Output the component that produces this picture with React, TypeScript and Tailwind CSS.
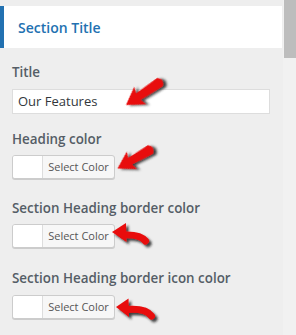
import React from "react";

const font = { fontFamily: '"Open Sans", "Noto Sans", sans-serif' };

function ColorButton({ mt }: { mt: string }) {
  return (
    <div className={`${mt} flex h-[24px] w-[103px] overflow-hidden rounded-[3px] border border-[#cccccc] bg-[#f7f7f7] shadow-[0_1px_0_#cccccc]`}>
      <div className="w-[30px] border-r border-[#dddddd] bg-white" />
      <div className="flex flex-1 items-center justify-center text-[11px] text-[#555555]">Select Color</div>
    </div>
  );
}

function Arrows() {
  const red = "#e80c0c";
  return (
    <svg className="pointer-events-none absolute left-0 top-0" width="296" height="335" viewBox="0 0 296 335">
      <defs>
        <filter id="sh" x="-50%" y="-50%" width="200%" height="200%">
          <feDropShadow dx="2.5" dy="2.5" stdDeviation="1.3" floodColor="#222" floodOpacity="0.85" />
        </filter>
      </defs>
      <g filter="url(#sh)" transform="translate(126,105) rotate(-34)">
        <path d="M0,0 L17,-10.5 L15,-4 L41,-5 Q46.5,0 41,5 L15,4 L17,10.5 Z" fill={red} />
      </g>
      <g filter="url(#sh)" transform="translate(117.5,168.5) rotate(-30)">
        <path d="M0,0 L16.5,-10 L14.5,-3.8 L38,-5 Q43.5,0 38,5 L14.5,3.8 L16.5,10 Z" fill={red} />
      </g>
      <g filter="url(#sh)">
        <path d="M123,235 Q140,234 145.5,241" stroke={red} strokeWidth="7" strokeLinecap="round" fill="none" />
        <path d="M112,232 L126,223 L126.5,242 Z" fill={red} />
      </g>
      <g filter="url(#sh)">
        <path d="M127,309.5 Q146,308 151.5,316" stroke={red} strokeWidth="7" strokeLinecap="round" fill="none" />
        <path d="M116,307 L128.5,298.5 L129,317 Z" fill={red} />
      </g>
    </svg>
  );
}

export default function App() {
  return (
    <div className="relative flex h-[335px] w-[296px] overflow-hidden bg-[#eeeeee]" style={font}>
      <div className="flex w-[283px] flex-col pt-[6px]">
        <div className="mr-[1px] flex h-[42px] items-center border-l-4 border-[#2271b1] bg-white pl-[14px] text-[14px] font-semibold text-[#2271b1]">
          Section Title
        </div>
        <div className="px-3">
          <div className="mt-[14px] text-[13.4px] font-semibold leading-[20px] text-[#555d66]">Title</div>
          <div className="mt-[7px] flex h-[25px] w-[258px] items-center border border-[#dddddd] bg-white px-[5px] text-[13px] text-[#32373c]">
            Our Features
          </div>
          <div className="mt-[15px] text-[13.4px] font-semibold leading-[20px] text-[#555d66]">Heading color</div>
          <ColorButton mt="mt-[6px]" />
          <div className="mt-[19px] text-[13.4px] font-semibold leading-[20px] text-[#555d66]">Section Heading border color</div>
          <ColorButton mt="mt-[6px]" />
          <div className="mt-[20px] text-[13.4px] font-semibold leading-[20px] text-[#555d66]">Section Heading border icon color</div>
          <ColorButton mt="mt-[7px]" />
        </div>
      </div>
      <div className="flex w-[13px] flex-col bg-[#f1f1f1] pl-[1px]">
        <div className="h-[58px] bg-[#bdbdbd]" />
      </div>
      <Arrows />
    </div>
  );
}
